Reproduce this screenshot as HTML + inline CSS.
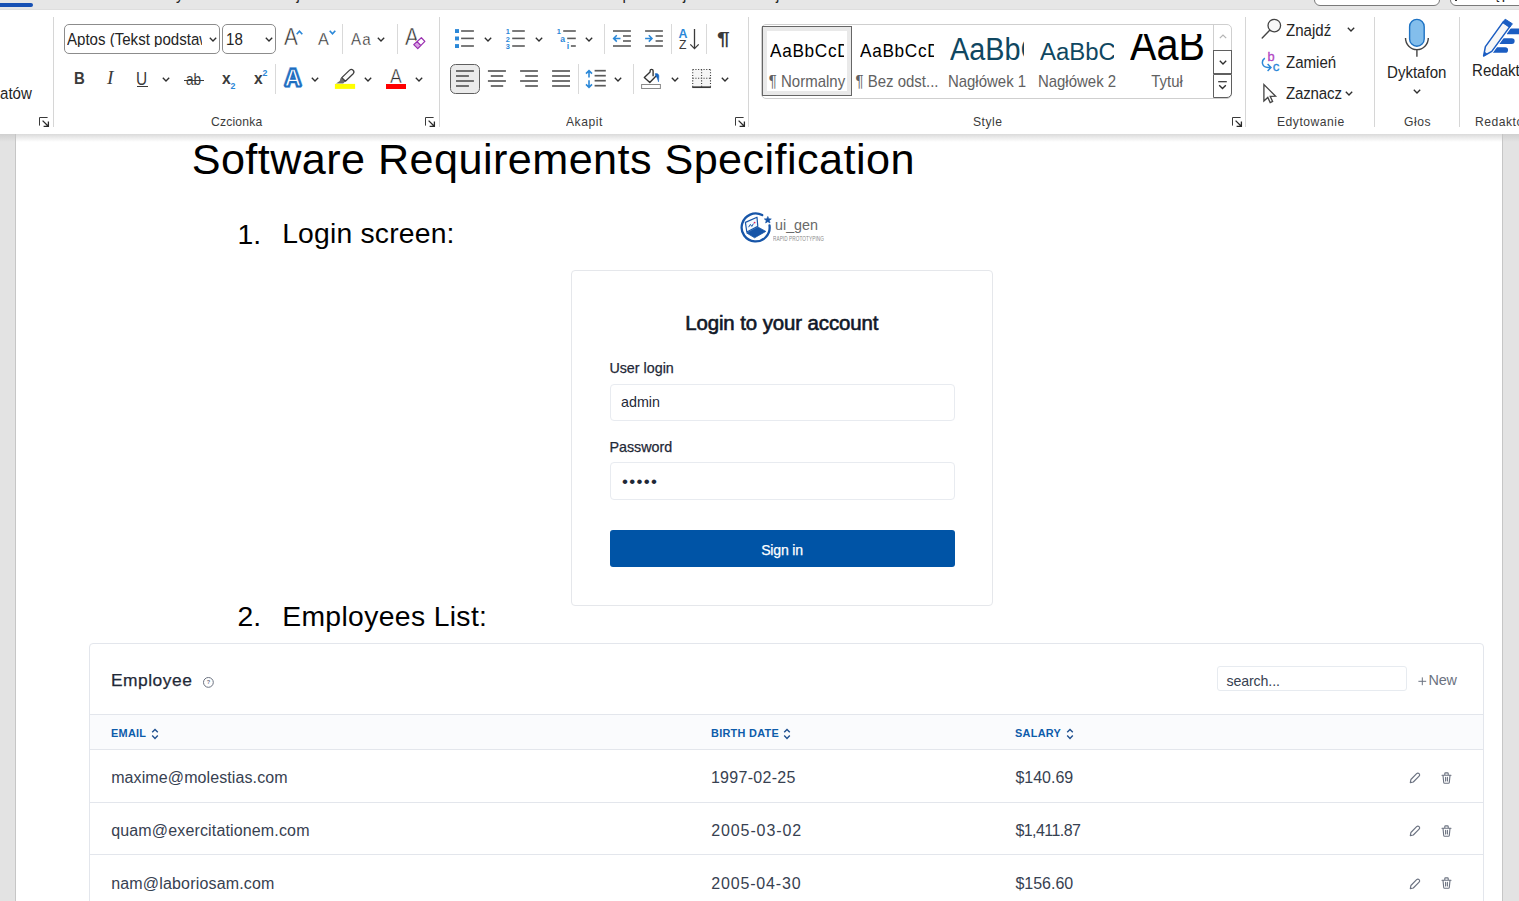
<!DOCTYPE html>
<html lang="pl">
<head>
<meta charset="utf-8">
<title>Software Requirements Specification - Word</title>
<style>
*{box-sizing:border-box;margin:0;padding:0}
html,body{width:1519px;height:901px;overflow:hidden;background:#e3e3e3}
body{position:relative;font-family:"Liberation Sans",sans-serif;color:#242424}
.abs,.abs *{position:absolute}
.t{position:absolute;white-space:nowrap;line-height:1}
svg{position:absolute;overflow:visible}
/* ---------- top strip ---------- */
#strip{position:absolute;left:0;top:0;width:1519px;height:10px;background:#e6e6e6;border-bottom:1px solid #dedede;overflow:hidden}
.tab{top:-14.5px;color:#1a1a1a}
#tabbar{position:absolute;left:0;top:3px;width:33px;height:4px;background:#1650b4;border-radius:0 2px 2px 0}
/* ---------- ribbon ---------- */
#ribbon{position:absolute;left:0;top:10px;width:1519px;height:124px;background:#fff;overflow:hidden}
#rshadow{position:absolute;left:0;top:134px;width:1519px;height:8px;background:linear-gradient(#c4c4c4,rgba(220,220,220,0));z-index:5;opacity:.62}
.gsep{position:absolute;top:7px;width:1px;height:110px;background:#d6d6d6}
.ssep{position:absolute;width:1px;height:30px;background:#d9d9d9}
.glabel{font-size:13.2px;color:#3b3b3b;top:105.2px;transform:scaleX(.92);transform-origin:0 0;letter-spacing:.55px}
.rl{font-size:16.3px;color:#242424;transform:scaleX(.925);transform-origin:0 0}
.slabel{font-size:16.2px;color:#616161;text-align:center;transform:scaleX(.925);transform-origin:50% 0}
.ic{color:#3b3b3b;transform-origin:0 0}
.combo{position:absolute;height:30px;border:1px solid #8c8c8c;border-radius:5px;background:#fff}
/* ---------- document ---------- */
#page{position:absolute;left:15px;top:134px;width:1488px;height:767px;background:#fff;border-left:1px solid #c6c6c6;border-right:1px solid #c6c6c6;overflow:hidden}
.doc{color:#000}
#doc{position:absolute;left:0;top:134px;width:1519px;height:767px;overflow:hidden}
#doc>*{margin-top:-134px}
.med{-webkit-text-stroke:.25px currentColor}
.th{font-size:11.6px;font-weight:700;color:#0d5cab;transform:scaleX(.94);transform-origin:0 0;letter-spacing:.3px}
.td{font-size:16px;color:#374151}
</style>
</head>
<body>

<!-- ======= top strip (bottom edge of tab row) ======= -->
<div id="strip">
  <div id="tabbar"></div>
  <div class="t rl tab" style="left:165px">Rysowanie</div>
  <div class="t rl tab" style="left:273px">Projektowanie</div>
  <div class="t rl tab" style="left:580.5px;letter-spacing:.45px">Korespondencja</div>
  <div class="t rl tab" style="left:725px">Recenzja</div>
  <div style="position:absolute;left:1314px;top:-20px;width:126px;height:26px;border:1px solid #7a7a7a;border-radius:6px;background:#fff"></div>
  <div style="position:absolute;left:1450px;top:-20px;width:90px;height:26px;border:1px solid #7a7a7a;border-radius:6px;background:#fff"></div>
  <div style="position:absolute;left:1455.4px;top:0;width:1.6px;height:1.3px;background:#333"></div>
  <div class="t rl tab" style="left:1454px;top:-14.6px">Udostępnianie</div>
</div>

<!-- ======= ribbon ======= -->
<div id="ribbon">
  <!-- group separators (ribbon-local coords: y = page y - 10) -->
  <div class="gsep" style="left:53px"></div>
  <div class="gsep" style="left:439px"></div>
  <div class="gsep" style="left:748px"></div>
  <div class="gsep" style="left:1245px"></div>
  <div class="gsep" style="left:1374px"></div>
  <div class="gsep" style="left:1459px"></div>

  <!-- ===== clipboard group remnant ===== -->
  <div class="t rl" style="left:-.2px;top:75.2px">atów</div>
  <svg style="left:39px;top:107px" width="10" height="10" viewBox="0 0 10 10"><path d="M0.5 8.6V0.5H8.6" fill="none" stroke="#3a3a3a" stroke-width="1"/><path d="M3.6 3.6L9 9M9.4 4.6V9.4H4.6" fill="none" stroke="#2a2a2a" stroke-width="1.3"/></svg>

  <!-- ===== Czcionka (Font) group ===== -->
  <div class="combo" style="left:64px;top:14px;width:156px"><span class="t rl" style="left:2.2px;top:6px;width:146px;overflow:hidden">Aptos (Tekst podstaw</span>
    <svg style="left:143.5px;top:12.3px" width="8" height="5" viewBox="0 0 8 5"><path d="M0.8 0.8L4 4L7.2 0.8" fill="none" stroke="#2e2e2e" stroke-width="1.35"/></svg></div>
  <div class="combo" style="left:222px;top:14px;width:54px"><span class="t rl" style="left:2.6px;top:6px">18</span>
    <svg style="left:41.5px;top:12.3px" width="8" height="5" viewBox="0 0 8 5"><path d="M0.8 0.8L4 4L7.2 0.8" fill="none" stroke="#2e2e2e" stroke-width="1.35"/></svg></div>

  <!-- grow / shrink font -->
  <div class="t ic" style="left:284.3px;top:16.3px;font-size:23px;transform:scaleX(.9);-webkit-text-stroke:.5px #fff;color:#2f2f2f">A</div>
  <svg style="left:295.9px;top:19.8px" width="7" height="5" viewBox="0 0 7 5"><path d="M0.7 4.3L3.5 1.1L6.3 4.3" fill="none" stroke="#2b88d8" stroke-width="1.6"/></svg>
  <div class="t ic" style="left:317.8px;top:21.4px;font-size:17.1px;transform:scaleX(.95);-webkit-text-stroke:.3px #fff;color:#2f2f2f">A</div>
  <svg style="left:328.5px;top:19.8px" width="7" height="5" viewBox="0 0 7 5"><path d="M0.7 0.7L3.5 3.9L6.3 0.7" fill="none" stroke="#2b88d8" stroke-width="1.6"/></svg>
  <div class="ssep" style="left:342px;top:14px"></div>
  <div class="t ic" style="left:350.9px;top:20.9px;font-size:17.2px;letter-spacing:1.3px;transform:scaleX(.88);-webkit-text-stroke:.3px #fff;color:#2f2f2f">Aa</div>
  <svg style="left:377.4px;top:27px" width="8" height="5" viewBox="0 0 8 5"><path d="M0.8 0.8L4 4L7.2 0.8" fill="none" stroke="#2e2e2e" stroke-width="1.35"/></svg>
  <div class="ssep" style="left:397px;top:14px"></div>
  <!-- clear formatting -->
  <div class="t ic" style="left:404.6px;top:16.3px;font-size:23px;transform:scaleX(.9);-webkit-text-stroke:.5px #fff;color:#2f2f2f">A</div>
  <svg style="left:411.6px;top:25.6px" width="14.7" height="13.8" viewBox="0 0 16 15"><path d="M10.2 1.9L14 5.9L6.3 13.8L1.9 9.4Z" fill="#fff" stroke="#fff" stroke-width="3"/><path d="M5.3 5.9L9.6 10.3L6.3 13.8L1.9 9.4Z" fill="#d9a3e3"/><path d="M10.2 1.9L14 5.9L6.3 13.8L1.9 9.4ZM5.3 5.9L9.6 10.3" fill="none" stroke="#9a2fb0" stroke-width="1.35" stroke-linejoin="round"/></svg>

  <!-- row 2 : B I U ab x2 x2 -->
  <div class="t ic" style="left:73.8px;top:59.6px;font-size:17.4px;font-weight:700;transform:scaleX(.86)">B</div>
  <div class="t ic" style="left:107px;top:58.2px;font-size:19.4px;font-style:italic;font-family:'Liberation Serif',serif">I</div>
  <div class="t ic" style="left:136.4px;top:61px;font-size:17.6px;transform:scaleX(.88)">U</div>
  <div style="position:absolute;left:136.5px;top:75.6px;width:11.6px;height:1.4px;background:#3b3b3b"></div>
  <svg style="left:162.3px;top:67px" width="8" height="5" viewBox="0 0 8 5"><path d="M0.8 0.8L4 4L7.2 0.8" fill="none" stroke="#2e2e2e" stroke-width="1.35"/></svg>
  <div class="t ic" style="left:185.8px;top:60.6px;font-size:17px;transform:scaleX(.8)">ab</div>
  <div style="position:absolute;left:184px;top:70px;width:20.2px;height:1.2px;background:#3b3b3b"></div>
  <div class="t ic" style="left:221.6px;top:59.8px;font-size:17px;font-weight:700;transform:scaleX(.92)">x</div>
  <div class="t" style="left:230.6px;top:72.2px;font-size:8.8px;font-weight:700;color:#2b88d8">2</div>
  <div class="t ic" style="left:253.8px;top:59.8px;font-size:17px;font-weight:700;transform:scaleX(.92)">x</div>
  <div class="t" style="left:262.5px;top:58.6px;font-size:8.8px;font-weight:700;color:#2b88d8">2</div>
  <div class="ssep" style="left:275px;top:53.5px"></div>
  <!-- text effects -->
  <svg style="left:278px;top:54px" width="30" height="28" viewBox="278 64 30 28"><text x="284.6" y="86.1" font-family="Liberation Sans, sans-serif" font-weight="700" font-size="23.3" fill="#2a7bd0" stroke="#2a7bd0" stroke-width="3.8" stroke-linejoin="miter" stroke-miterlimit="1.6" opacity=".5">A</text><text x="284.6" y="86.1" font-family="Liberation Sans, sans-serif" font-weight="700" font-size="23.3" fill="#1c6dc0" stroke="#1c6dc0" stroke-width="2.7" stroke-linejoin="miter" stroke-miterlimit="1.6">A</text><text x="284.6" y="86.1" font-family="Liberation Sans, sans-serif" font-weight="700" font-size="23.3" fill="#fff" stroke="#1c6dc0" stroke-width="1.25">A</text></svg>
  <svg style="left:310.6px;top:67px" width="8" height="5" viewBox="0 0 8 5"><path d="M0.8 0.8L4 4L7.2 0.8" fill="none" stroke="#2e2e2e" stroke-width="1.35"/></svg>
  <!-- highlighter -->
  <svg style="left:330px;top:54px" width="30" height="28" viewBox="330 63.4 30 28">
    <path d="M336 82.9L339.7 80.5L340.5 77.7L341.8 77L345.4 80.6L343.2 82.9Z" fill="#6e6e6e"/>
    <path d="M341.8 77L349.6 69.5a2.55 2.55 0 0 1 3.6 3.6L345.4 80.6Z" fill="#fafafa" stroke="#3d3d3d" stroke-width="1.25" stroke-linejoin="round"/>
    <rect x="334.9" y="83.3" width="20.2" height="5" fill="#ffff00"/>
  </svg>
  <svg style="left:364.3px;top:67px" width="8" height="5" viewBox="0 0 8 5"><path d="M0.8 0.8L4 4L7.2 0.8" fill="none" stroke="#2e2e2e" stroke-width="1.35"/></svg>
  <!-- font colour -->
  <div class="t ic" style="left:389.9px;top:57.2px;font-size:19.6px;transform:scaleX(.9);-webkit-text-stroke:.5px #fff;color:#2f2f2f">A</div>
  <div style="position:absolute;left:386px;top:73.9px;width:20.1px;height:5px;background:#ff0000"></div>
  <svg style="left:415.4px;top:67px" width="8" height="5" viewBox="0 0 8 5"><path d="M0.8 0.8L4 4L7.2 0.8" fill="none" stroke="#2e2e2e" stroke-width="1.35"/></svg>

  <div class="t glabel" style="left:211px;letter-spacing:.2px">Czcionka</div>
  <svg style="left:425px;top:107px" width="10" height="10" viewBox="0 0 10 10"><path d="M0.5 8.6V0.5H8.6" fill="none" stroke="#3a3a3a" stroke-width="1"/><path d="M3.6 3.6L9 9M9.4 4.6V9.4H4.6" fill="none" stroke="#2a2a2a" stroke-width="1.3"/></svg>
  <!-- ===== Akapit (Paragraph) group ===== -->
  <div style="position:absolute;left:450px;top:54px;width:30px;height:30px;border:1.3px solid #5f5f5f;border-radius:5.5px;background:#ebebeb"></div>
  <svg style="left:0;top:0" width="760" height="124" viewBox="0 0 760 124"><rect x="455" y="19.1" width="4" height="3.9" fill="#2b88d8"/><path d="M461.1 21H473.9" stroke="#5a5a5a" stroke-width="1.6"/><rect x="455" y="26.5" width="4" height="3.9" fill="#2b88d8"/><path d="M461.1 28.4H473.9" stroke="#5a5a5a" stroke-width="1.6"/><rect x="455" y="34.1" width="4" height="3.9" fill="#2b88d8"/><path d="M461.1 36H473.9" stroke="#5a5a5a" stroke-width="1.6"/><path d="M512.2 21H524.8" stroke="#5a5a5a" stroke-width="1.6"/><path d="M512.2 28.4H524.8" stroke="#5a5a5a" stroke-width="1.6"/><path d="M512.2 36H524.8" stroke="#5a5a5a" stroke-width="1.6"/><path d="M563.2 21H575.8" stroke="#5a5a5a" stroke-width="1.6"/><path d="M567.2 28.4H575.8" stroke="#5a5a5a" stroke-width="1.6"/><path d="M570.9 36H575.8" stroke="#5a5a5a" stroke-width="1.6"/><path d="M613 21H630.9" stroke="#5a5a5a" stroke-width="1.6"/><path d="M623 26H630.9" stroke="#5a5a5a" stroke-width="1.6"/><path d="M623 31H630.9" stroke="#5a5a5a" stroke-width="1.6"/><path d="M613 36H630.9" stroke="#5a5a5a" stroke-width="1.6"/><path d="M613.6 28.4H620.5M616.8 25.2L613.6 28.4L616.8 31.6" fill="none" stroke="#2b88d8" stroke-width="1.5"/><path d="M645.1 21H662.9" stroke="#5a5a5a" stroke-width="1.6"/><path d="M655.6 26H662.9" stroke="#5a5a5a" stroke-width="1.6"/><path d="M655.6 31H662.9" stroke="#5a5a5a" stroke-width="1.6"/><path d="M645.1 36H662.9" stroke="#5a5a5a" stroke-width="1.6"/><path d="M645.1 28.4H652M648.8 25.2L652 28.4L648.8 31.6" fill="none" stroke="#2b88d8" stroke-width="1.5"/><path d="M694.5 19V38.2M690.3 34.4L694.5 38.6L698.7 34.4" fill="none" stroke="#3b3b3b" stroke-width="1.3"/><path d="M456 61H473.9" stroke="#5a5a5a" stroke-width="1.7"/><path d="M487.9 61H505.9" stroke="#5a5a5a" stroke-width="1.7"/><path d="M520.1 61H537.9" stroke="#5a5a5a" stroke-width="1.7"/><path d="M552.1 61H570" stroke="#5a5a5a" stroke-width="1.7"/><path d="M594.6 60.7H605.8" stroke="#5a5a5a" stroke-width="1.7"/><path d="M456 66H468.9" stroke="#5a5a5a" stroke-width="1.7"/><path d="M490.8 66H503.2" stroke="#5a5a5a" stroke-width="1.7"/><path d="M525.2 66H537.9" stroke="#5a5a5a" stroke-width="1.7"/><path d="M552.1 66H570" stroke="#5a5a5a" stroke-width="1.7"/><path d="M594.6 65.7H605.8" stroke="#5a5a5a" stroke-width="1.7"/><path d="M456 71H473.9" stroke="#5a5a5a" stroke-width="1.7"/><path d="M487.9 71H505.9" stroke="#5a5a5a" stroke-width="1.7"/><path d="M520.1 71H537.9" stroke="#5a5a5a" stroke-width="1.7"/><path d="M552.1 71H570" stroke="#5a5a5a" stroke-width="1.7"/><path d="M594.6 70.7H605.8" stroke="#5a5a5a" stroke-width="1.7"/><path d="M456 76H468.9" stroke="#5a5a5a" stroke-width="1.7"/><path d="M490.8 76H503.2" stroke="#5a5a5a" stroke-width="1.7"/><path d="M525.2 76H537.9" stroke="#5a5a5a" stroke-width="1.7"/><path d="M552.1 76H570" stroke="#5a5a5a" stroke-width="1.7"/><path d="M594.6 75.7H605.8" stroke="#5a5a5a" stroke-width="1.7"/><path d="M589 61V67.5M586 63.6L589 60.6L592 63.6M589 70.2V77M586 74.4L589 77.4L592 74.4" fill="none" stroke="#2b88d8" stroke-width="1.6"/><path d="M650.1 61.9L644.3 67.5L649.8 72.5L656.3 65.8Z" fill="#fafafa"/><path d="M656.3 65.8L649.8 72.5L644.3 67.5L650.1 61.9V60.7C650.1 58.9 653.1 58.9 653.1 60.7V66.2" fill="none" stroke="#333" stroke-width="1.35" stroke-linejoin="round" stroke-linecap="butt"/><path d="M655.1 63.7C657.4 62.8 659.1 64.4 658.9 66.4L658.5 71.9C657.9 69.4 657.1 67.4 655.8 65.9Z" fill="#1565c0" stroke="#1565c0" stroke-width=".5" stroke-linejoin="round"/><rect x="641.6" y="74.5" width="18.8" height="4" fill="#fff" stroke="#8a8a8a" stroke-width="1"/><rect x="692.5" y="59.3" width="18" height="18" fill="#f6f6f6"/><path d="M692.7 59.5H710.7M692.7 68.3H710.7M692.7 59.5V77M701.6 59.5V77M710.5 59.5V77" fill="none" stroke="#3b3b3b" stroke-width="1.1" stroke-dasharray="1.1 1.6"/><path d="M692.2 77.2H710.9" stroke="#3b3b3b" stroke-width="1.7"/></svg>
  <div class="t" style="left:505.8px;top:18.2px;font-size:7.4px;font-weight:700;color:#2b88d8">1</div><div class="t" style="left:505.8px;top:25.6px;font-size:7.4px;font-weight:700;color:#2b88d8">2</div><div class="t" style="left:505.8px;top:33.3px;font-size:7.4px;font-weight:700;color:#2b88d8">3</div>
  <div class="t" style="left:556.8px;top:18.2px;font-size:7.4px;font-weight:700;color:#2b88d8">1</div><div class="t" style="left:560.3px;top:24.6px;font-size:8.6px;font-weight:700;color:#2b88d8">a</div><div class="t" style="left:566.8px;top:31.8px;font-size:8.6px;font-weight:700;color:#2b88d8">i</div>
  <svg style="left:484.3px;top:27px" width="8" height="5" viewBox="0 0 8 5"><path d="M0.8 0.8L4 4L7.2 0.8" fill="none" stroke="#2e2e2e" stroke-width="1.35"/></svg><svg style="left:535.4px;top:27px" width="8" height="5" viewBox="0 0 8 5"><path d="M0.8 0.8L4 4L7.2 0.8" fill="none" stroke="#2e2e2e" stroke-width="1.35"/></svg><svg style="left:584.5px;top:27px" width="8" height="5" viewBox="0 0 8 5"><path d="M0.8 0.8L4 4L7.2 0.8" fill="none" stroke="#2e2e2e" stroke-width="1.35"/></svg>
  <div class="ssep" style="left:604px;top:14px"></div>
  <div class="ssep" style="left:671px;top:14px"></div>
  <div class="t" style="left:678.4px;top:17.6px;font-size:12.4px;font-weight:700;color:#2b88d8">A</div>
  <div class="t ic" style="left:678.8px;top:29.4px;font-size:12px;transform:scaleX(1.02)">Z</div>
  <div class="ssep" style="left:706px;top:14px"></div>
  <div class="t ic" style="left:716.6px;top:19.6px;font-size:18px;font-weight:700;transform:scaleX(1.28)">¶</div>
  <div class="ssep" style="left:578px;top:54px"></div>
  <svg style="left:613.5px;top:67px" width="8" height="5" viewBox="0 0 8 5"><path d="M0.8 0.8L4 4L7.2 0.8" fill="none" stroke="#2e2e2e" stroke-width="1.35"/></svg>
  <div class="ssep" style="left:633px;top:54px"></div>
  <svg style="left:670.5px;top:67px" width="8" height="5" viewBox="0 0 8 5"><path d="M0.8 0.8L4 4L7.2 0.8" fill="none" stroke="#2e2e2e" stroke-width="1.35"/></svg><svg style="left:721.3px;top:67px" width="8" height="5" viewBox="0 0 8 5"><path d="M0.8 0.8L4 4L7.2 0.8" fill="none" stroke="#2e2e2e" stroke-width="1.35"/></svg>
  <div class="t glabel" style="left:566px">Akapit</div>
  <svg style="left:734.5px;top:107px" width="10" height="10" viewBox="0 0 10 10"><path d="M0.5 8.6V0.5H8.6" fill="none" stroke="#3a3a3a" stroke-width="1"/><path d="M3.6 3.6L9 9M9.4 4.6V9.4H4.6" fill="none" stroke="#2a2a2a" stroke-width="1.3"/></svg>
  <!-- ===== Style (Styles) group ===== -->
  <div style="position:absolute;left:761px;top:13.8px;width:471px;height:74.8px;border:1px solid #cfcfcf;border-radius:5px;background:#fff"></div>
  <div style="position:absolute;left:762px;top:16px;width:90px;height:69.6px;border:1px solid #666;background:#fff;box-shadow:inset 0 0 0 4px #e9e9e9"></div>
  <div style="position:absolute;left:769.6px;top:24px;width:74.6px;height:38px;overflow:hidden"><span class="t" style="left:0;top:8.16px;font-size:18.6px;color:#000;letter-spacing:.75px;transform:scaleX(.925);transform-origin:0 0">AaBbCcDd</span></div>
  <div class="t slabel" style="left:757.4px;top:63.3px;width:100px">¶ Normalny</div>
  <div style="position:absolute;left:859.6px;top:24px;width:74.6px;height:38px;overflow:hidden"><span class="t" style="left:0;top:8.16px;font-size:18.6px;color:#000;letter-spacing:.75px;transform:scaleX(.925);transform-origin:0 0">AaBbCcDd</span></div>
  <div class="t slabel" style="left:847.4px;top:63.3px;width:100px">¶ Bez odst...</div>
  <div style="position:absolute;left:949.6px;top:24px;width:74.6px;height:38px;overflow:hidden"><span class="t" style="left:0;top:0.16px;font-size:31px;color:#0f4761;transform:scaleX(.93);transform-origin:0 0">AaBbCcDd</span></div>
  <div class="t slabel" style="left:937.4px;top:63.3px;width:100px">Nagłówek 1</div>
  <div style="position:absolute;left:1039.6px;top:24px;width:74.6px;height:38px;overflow:hidden"><span class="t" style="left:0;top:5.59px;font-size:24.7px;color:#0f4761;transform:scaleX(.97);transform-origin:0 0">AaBbC</span></div>
  <div class="t slabel" style="left:1027.4px;top:63.3px;width:100px">Nagłówek 2</div>
  <div style="position:absolute;left:1129.6px;top:24px;width:74.6px;height:38px;overflow:hidden"><span class="t" style="left:0;top:-12.09px;font-size:45px;color:#000;transform:scaleX(.88);transform-origin:0 0">AaB</span></div>
  <div class="t slabel" style="left:1117.4px;top:63.3px;width:100px">Tytuł</div>
  <!-- gallery scroll buttons -->
  <div style="position:absolute;left:1213px;top:15px;width:1px;height:25px;background:#cfcfcf"></div>
  <svg style="left:1218.6px;top:24.2px" width="8" height="5" viewBox="0 0 8 5"><path d="M0.8 4.2L4 1L7.2 4.2" fill="none" stroke="#b4b4b4" stroke-width="1.2"/></svg>
  <div style="position:absolute;left:1213px;top:40px;width:19px;height:24px;border:1px solid #5f5f5f;background:#fff"></div>
  <svg style="left:1218.6px;top:50.3px" width="8" height="5" viewBox="0 0 8 5"><path d="M0.8 0.8L4 4L7.2 0.8" fill="none" stroke="#2e2e2e" stroke-width="1.35"/></svg>
  <div style="position:absolute;left:1213px;top:63.8px;width:19px;height:24.7px;border:1px solid #5f5f5f;border-radius:0 0 5px 0;background:#fff"></div>
  <svg style="left:1218.2px;top:70.6px" width="9" height="9" viewBox="0 0 9 9"><path d="M0.2 0.7H8.8" stroke="#2e2e2e" stroke-width="1.2"/><path d="M1.2 4.2L4.5 7.5L7.8 4.2" fill="none" stroke="#2e2e2e" stroke-width="1.35"/></svg>
  <div class="t glabel" style="left:973px">Style</div>
  <svg style="left:1231.5px;top:107px" width="10" height="10" viewBox="0 0 10 10"><path d="M0.5 8.6V0.5H8.6" fill="none" stroke="#3a3a3a" stroke-width="1"/><path d="M3.6 3.6L9 9M9.4 4.6V9.4H4.6" fill="none" stroke="#2a2a2a" stroke-width="1.3"/></svg>
  <!-- ===== Edytowanie (Editing) group ===== -->
  <svg style="left:1255px;top:2px" width="110" height="100" viewBox="1255 12 110 100">
    <circle cx="1274.3" cy="25.6" r="6.3" fill="#f7f7f7" stroke="#444" stroke-width="1.3"/>
    <path d="M1269.7 30.3L1262.2 38" stroke="#444" stroke-width="1.4" stroke-linecap="round"/>
    <path d="M1264.8 58.2C1260.8 61.2 1261.8 67.2 1268 67.5H1270.6M1267.6 64.1L1271 67.5L1267.6 70.9" fill="none" stroke="#2b88d8" stroke-width="1.45"/>
    <path d="M1263.9 84.6V101L1267.8 97.4L1270.2 102.6L1272.6 101.4L1270.2 96.4L1275.6 96.2Z" fill="#fff" stroke="#444" stroke-width="1.3" stroke-linejoin="miter"/>
  </svg>
  <div class="t" style="left:1267.6px;top:40.6px;font-size:12.8px;color:#b146c2;-webkit-text-stroke:.3px #b146c2">b</div>
  <div class="t" style="left:1272.8px;top:50px;font-size:13.4px;color:#2b88d8;-webkit-text-stroke:.3px #2b88d8">c</div>
  <div class="t rl" style="left:1286px;top:11.5px">Znajdź</div>
  <svg style="left:1346.5px;top:17.2px" width="8" height="5" viewBox="0 0 8 5"><path d="M0.8 0.8L4 4L7.2 0.8" fill="none" stroke="#2e2e2e" stroke-width="1.35"/></svg>
  <div class="t rl" style="left:1286px;top:43.5px">Zamień</div>
  <div class="t rl" style="left:1286px;top:75.3px;letter-spacing:-.18px">Zaznacz</div>
  <svg style="left:1344.6px;top:80.5px" width="8" height="5" viewBox="0 0 8 5"><path d="M0.8 0.8L4 4L7.2 0.8" fill="none" stroke="#2e2e2e" stroke-width="1.35"/></svg>
  <div class="t glabel" style="left:1277px">Edytowanie</div>

  <!-- ===== Głos (Voice) group ===== -->
  <svg style="left:1400px;top:5px" width="36" height="45" viewBox="1400 15 36 45">
    <rect x="1409.6" y="19.4" width="14.6" height="26.8" rx="7.3" fill="#83beec" stroke="#1e73c4" stroke-width="1.4"/>
    <path d="M1405.5 38A11.4 11.6 0 0 0 1428.3 38M1416.9 50.2V56.8" fill="none" stroke="#444" stroke-width="1.4"/>
  </svg>
  <div class="t rl" style="left:1387px;top:54.2px">Dyktafon</div>
  <svg style="left:1412.5px;top:79.2px" width="8" height="5" viewBox="0 0 8 5"><path d="M0.8 0.8L4 4L7.2 0.8" fill="none" stroke="#2e2e2e" stroke-width="1.35"/></svg>
  <div class="t glabel" style="left:1404.4px">Głos</div>

  <!-- ===== Redaktor (Editor) group ===== -->
  <svg style="left:1475px;top:5px" width="44" height="45" viewBox="1475 15 44 45">
    <path d="M1508.4 31.4H1525M1500 41.1H1511.8M1492.8 50H1505.2" stroke="#1b5dc2" stroke-width="5.7" stroke-linecap="round"/>
    <path d="M1503.4 21.6L1485.4 46.6L1483.6 56L1491.8 51.4L1510 26.4Z" fill="#fff" stroke="#fff" stroke-width="3.4" stroke-linejoin="round"/>
    <path d="M1503.4 21.6L1485.4 46.6L1483.6 56L1491.8 51.4L1510 26.4Z" fill="#f7f7f7" stroke="#1b5dc2" stroke-width="1.5" stroke-linejoin="round"/>
    <path d="M1505.2 19.2L1512.4 23.8L1509.6 27.4L1502.6 22.6Z" fill="#1b5dc2" stroke="#1b5dc2" stroke-width="1" stroke-linejoin="round"/>
    <path d="M1483.4 56.4L1484.4 51.6L1487.6 53.9Z" fill="#1b5dc2"/>
  </svg>
  <div class="t rl" style="left:1472.2px;top:52.1px">Redaktor</div>
  <div class="t glabel" style="left:1474.6px">Redaktor</div>

</div>
<div id="rshadow"></div>

<!-- ======= document page ======= -->
<div id="page">
</div>

<div id="doc">
<div class="t doc" style="left:191.7px;top:138.43px;font-size:43.2px;letter-spacing:.43px">Software Requirements Specification</div>
<div class="t doc" style="left:237.4px;top:219.64px;font-size:28.3px">1.</div>
<div class="t doc" style="left:282.2px;top:219.34px;font-size:28.3px;letter-spacing:.2px">Login screen:</div>
<div class="t doc" style="left:237.4px;top:601.84px;font-size:28.3px">2.</div>
<div class="t doc" style="left:282.2px;top:601.64px;font-size:28.3px;letter-spacing:.36px">Employees List:</div>
<svg style="left:736px;top:208px" width="40" height="40" viewBox="736 208 40 40">
  <path d="M762.2 215.1A14 14 0 1 0 769.5 225.5" fill="none" stroke="#1755a8" stroke-width="2.3" stroke-linecap="round"/>
  <path d="M767.8 216.4L768.8 218.7L771.3 218.9L769.4 220.5L770 223L767.8 221.7L765.6 223L766.2 220.5L764.3 218.9L766.8 218.7Z" fill="#1755a8" stroke="#1755a8" stroke-width=".6" stroke-linejoin="round"/>
  <path d="M745.4 222.4L757 217.2L757.8 226.2L746.8 232Z" fill="#f4f8fd" stroke="#1755a8" stroke-width="1.2" stroke-linejoin="round"/>
  <path d="M748.6 227.2L750.4 224.4L751.8 226.4L753.4 223.6" fill="none" stroke="#1755a8" stroke-width="1"/>
  <circle cx="754.6" cy="222.6" r=".9" fill="#e0245e"/>
  <path d="M746.7 233L757.9 227L765.8 231.4L754.6 237.8Z" fill="#1755a8" stroke="#1755a8" stroke-width=".8" stroke-linejoin="round"/>
</svg>
<div class="t" style="left:775px;top:216.56px;font-size:15.4px;color:#6a6a6a;transform:scaleX(.93);transform-origin:0 0">ui_gen</div>
<div class="t" style="left:772.5px;top:235.6px;font-size:6.3px;color:#8a8a8a;transform:scaleX(.745);transform-origin:0 0;letter-spacing:.1px">RAPID PROTOTYPING</div>
<div style="position:absolute;left:571px;top:269.5px;width:422px;height:336px;border:1px solid #e5e7eb;border-radius:4px;background:#fff"></div>
<div class="t" style="left:581.8px;width:400px;text-align:center;top:312.73px;font-size:20.4px;color:#111827;-webkit-text-stroke:.62px #111827;letter-spacing:-.08px">Login to your account</div>
<div class="t med" style="left:609.4px;top:361.1px;font-size:14.3px;color:#1f2937">User login</div>
<div style="position:absolute;left:609.6px;top:383.6px;width:345px;height:37.4px;border:1px solid #e8ebf0;border-radius:4px;background:#fff"></div>
<div class="t" style="left:621px;top:394.7px;font-size:14.3px;color:#1f2937">admin</div>
<div class="t med" style="left:609.4px;top:439.7px;font-size:14.3px;color:#1f2937">Password</div>
<div style="position:absolute;left:609.6px;top:462.4px;width:345px;height:37.4px;border:1px solid #e8ebf0;border-radius:4px;background:#fff"></div>
<div class="t" style="left:621.9px;top:472.91px;font-size:17px;color:#1f2937;letter-spacing:1.3px">•••••</div>
<div style="position:absolute;left:609.6px;top:530px;width:345px;height:37px;border-radius:3px;background:#0054a6"></div>
<div class="t med" style="left:609.5px;width:345px;text-align:center;top:542.5px;font-size:14.1px;color:#fff;letter-spacing:-.2px">Sign in</div>
<div style="position:absolute;left:89px;top:643px;width:1395px;height:300px;border:1px solid #e3e6ec;border-radius:4px;background:#fff"></div>
<div class="t med" style="left:111px;top:672.27px;font-size:17.4px;letter-spacing:.5px;color:#1f2937">Employee</div>
<svg style="left:202px;top:676px" width="13" height="13" viewBox="0 0 13 13"><circle cx="6.4" cy="6.4" r="4.9" fill="none" stroke="#6b7280" stroke-width="1"/></svg>
<div class="t" style="left:206.7px;top:679.6px;font-size:5.6px;font-weight:700;color:#6b7280">?</div>
<div style="position:absolute;left:1217.4px;top:665.6px;width:189.6px;height:25.4px;border:1px solid #e7ebf0;border-radius:3px;background:#fff"></div>
<div class="t" style="left:1226.4px;top:673.58px;font-size:14.2px;color:#374151;letter-spacing:-.1px">search...</div>
<svg style="left:1417.6px;top:677px" width="9" height="9" viewBox="0 0 9 9"><path d="M4.3 0.4V8.2M0.4 4.3H8.2" stroke="#6b7280" stroke-width="1"/></svg>
<div class="t" style="left:1428.4px;top:673.41px;font-size:14.4px;color:#6b7280;letter-spacing:-.15px">New</div>
<div style="position:absolute;left:90px;top:714px;width:1393px;height:36px;border-top:1px solid #e3e6ec;border-bottom:1px solid #e3e6ec;background:#fafbfd"></div>
<div class="t th" style="left:111.0px;top:727.38px">EMAIL</div>
<svg style="left:150.6px;top:727.8px" width="8" height="12" viewBox="0 0 8 12"><path d="M1.2 4.2L4 1.4L6.8 4.2M1.2 7.6L4 10.4L6.8 7.6" fill="none" stroke="#1e4f8f" stroke-width="1.4"/></svg>
<div class="t th" style="left:711.0px;top:727.38px">BIRTH DATE</div>
<svg style="left:783px;top:727.8px" width="8" height="12" viewBox="0 0 8 12"><path d="M1.2 4.2L4 1.4L6.8 4.2M1.2 7.6L4 10.4L6.8 7.6" fill="none" stroke="#1e4f8f" stroke-width="1.4"/></svg>
<div class="t th" style="left:1015.2px;top:727.38px">SALARY</div>
<svg style="left:1065.6px;top:727.8px" width="8" height="12" viewBox="0 0 8 12"><path d="M1.2 4.2L4 1.4L6.8 4.2M1.2 7.6L4 10.4L6.8 7.6" fill="none" stroke="#1e4f8f" stroke-width="1.4"/></svg>
<div class="t td" style="left:111.2px;top:770.06px;letter-spacing:0.1px">maxime@molestias.com</div>
<div class="t td" style="left:710.9px;top:770.06px;letter-spacing:0.3px">1997-02-25</div>
<div class="t td" style="left:1015.4px;top:770.06px">$140.69</div>
<svg style="left:1409.4px;top:772.1px" width="12" height="12" viewBox="0 0 12 12"><path d="M7.6 1.7a1.75 1.75 0 0 1 2.5 2.5L4.3 10L1.3 10.6L1.9 7.5Z" fill="none" stroke="#6b7280" stroke-width="1.15" stroke-linejoin="round"/></svg>
<svg style="left:1441.2px;top:771.7px" width="11" height="12" viewBox="0 0 11 12"><path d="M1 3.2H10M3.8 3V1.6Q3.8 0.9 4.5 0.9H6.5Q7.2 0.9 7.2 1.6V3M2 3.4L2.7 10.4Q2.8 11.2 3.6 11.2H7.4Q8.2 11.2 8.3 10.4L9 3.4M4.6 5.4V9M6.4 5.4V9" fill="none" stroke="#6b7280" stroke-width="1.1" stroke-linecap="round"/></svg>
<div style="position:absolute;left:90px;top:802px;width:1393px;height:1px;background:#e3e6ec"></div>
<div class="t td" style="left:111.2px;top:822.96px;letter-spacing:0.15px">quam@exercitationem.com</div>
<div class="t td" style="left:711.2px;top:822.96px;letter-spacing:0.9px">2005-03-02</div>
<div class="t td" style="left:1015.4px;top:822.96px;letter-spacing:-0.55px">$1,411.87</div>
<svg style="left:1409.4px;top:825.0px" width="12" height="12" viewBox="0 0 12 12"><path d="M7.6 1.7a1.75 1.75 0 0 1 2.5 2.5L4.3 10L1.3 10.6L1.9 7.5Z" fill="none" stroke="#6b7280" stroke-width="1.15" stroke-linejoin="round"/></svg>
<svg style="left:1441.2px;top:824.6px" width="11" height="12" viewBox="0 0 11 12"><path d="M1 3.2H10M3.8 3V1.6Q3.8 0.9 4.5 0.9H6.5Q7.2 0.9 7.2 1.6V3M2 3.4L2.7 10.4Q2.8 11.2 3.6 11.2H7.4Q8.2 11.2 8.3 10.4L9 3.4M4.6 5.4V9M6.4 5.4V9" fill="none" stroke="#6b7280" stroke-width="1.1" stroke-linecap="round"/></svg>
<div style="position:absolute;left:90px;top:854px;width:1393px;height:1px;background:#e3e6ec"></div>
<div class="t td" style="left:111.2px;top:876.06px;letter-spacing:0.17px">nam@laboriosam.com</div>
<div class="t td" style="left:711.2px;top:876.06px;letter-spacing:0.85px">2005-04-30</div>
<div class="t td" style="left:1015.4px;top:876.06px">$156.60</div>
<svg style="left:1409.4px;top:877.8px" width="12" height="12" viewBox="0 0 12 12"><path d="M7.6 1.7a1.75 1.75 0 0 1 2.5 2.5L4.3 10L1.3 10.6L1.9 7.5Z" fill="none" stroke="#6b7280" stroke-width="1.15" stroke-linejoin="round"/></svg>
<svg style="left:1441.2px;top:877.4px" width="11" height="12" viewBox="0 0 11 12"><path d="M1 3.2H10M3.8 3V1.6Q3.8 0.9 4.5 0.9H6.5Q7.2 0.9 7.2 1.6V3M2 3.4L2.7 10.4Q2.8 11.2 3.6 11.2H7.4Q8.2 11.2 8.3 10.4L9 3.4M4.6 5.4V9M6.4 5.4V9" fill="none" stroke="#6b7280" stroke-width="1.1" stroke-linecap="round"/></svg>
</div>
</body>
</html>
